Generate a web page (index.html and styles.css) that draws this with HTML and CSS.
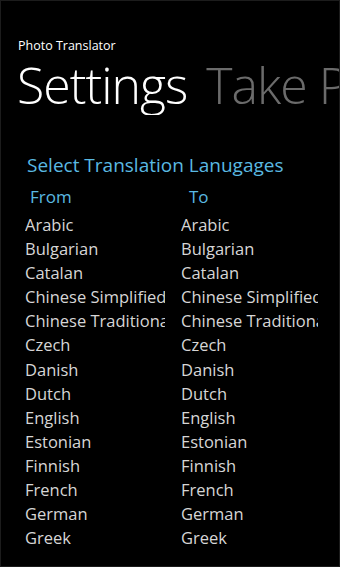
FILE: index.html
```html
<!DOCTYPE html>
<html lang="en">
<head>
    <meta charset="UTF-8">
    <meta name="viewport" content="width=device-width, initial-scale=1.0">
    <title>Photo Translator</title>
    <link rel="stylesheet" href="styles.css">
</head>
<body>
    <div class="phone">
        <header class="header">
            <div class="app-title">Photo Translator</div>
            <div class="pivot">
                <span class="pivot-item active">Settings</span>
                <span class="pivot-item">Take Photo</span>
            </div>
        </header>

        <section class="settings">
            <h2>Select Translation Lanugages</h2>
            <div class="columns">
                <div class="column">
                    <div class="col-label">From</div>
                    <ul class="lang-list">
                        <li>Arabic</li>
                        <li>Bulgarian</li>
                        <li>Catalan</li>
                        <li>Chinese Simplified</li>
                        <li>Chinese Traditional</li>
                        <li>Czech</li>
                        <li>Danish</li>
                        <li>Dutch</li>
                        <li>English</li>
                        <li>Estonian</li>
                        <li>Finnish</li>
                        <li>French</li>
                        <li>German</li>
                        <li>Greek</li>
                    </ul>
                </div>
                <div class="column">
                    <div class="col-label">To</div>
                    <ul class="lang-list">
                        <li>Arabic</li>
                        <li>Bulgarian</li>
                        <li>Catalan</li>
                        <li>Chinese Simplified</li>
                        <li>Chinese Traditional</li>
                        <li>Czech</li>
                        <li>Danish</li>
                        <li>Dutch</li>
                        <li>English</li>
                        <li>Estonian</li>
                        <li>Finnish</li>
                        <li>French</li>
                        <li>German</li>
                        <li>Greek</li>
                    </ul>
                </div>
            </div>
        </section>
    </div>
</body>
</html>
```

FILE: styles.css
```css
:root {
    --background: #000000;
    --text: #ffffff;
    --item: #d6d6d6;
    --muted: #6b6b6b;
    --accent: #5ab9e2;
}

* {
    margin: 0;
    padding: 0;
    box-sizing: border-box;
}

html, body {
    height: 100%;
}

body {
    font-family: "Open Sans", "Noto Sans", sans-serif;
    background: var(--background);
    color: var(--text);
    overflow: hidden;
}

.phone {
    height: 567px;
    overflow: hidden;
    border: 1px solid #1c1c1c;
}

.header {
    padding: 36px 0 0 16px;
}

.app-title {
    font-size: 12.5px;
    line-height: 18px;
    margin-left: 1px;
}

.pivot {
    display: flex;
    gap: 19px;
    white-space: nowrap;
    overflow: hidden;
    font-size: 50px;
    font-weight: 300;
    line-height: 60px;
    letter-spacing: -1px;
}

.pivot-item {
    display: block;
    height: 60px;
    flex-shrink: 0;
}

.pivot-item:not(.active) {
    color: var(--muted);
}

.settings {
    padding: 37px 0 0 24px;
}

.settings h2 {
    font-size: 19px;
    font-weight: 400;
    color: var(--accent);
    line-height: 26px;
    margin-left: 2px;
}

.columns {
    display: flex;
    margin-top: 7px;
}

.column {
    overflow: hidden;
}

.column:first-child {
    width: 140px;
    margin-right: 16px;
}

.column:last-child {
    width: 137px;
}

.col-label {
    font-size: 17px;
    color: var(--accent);
    line-height: 24px;
    margin-left: 5px;
    margin-bottom: 4px;
}

.column:last-child .col-label {
    margin-left: 8px;
}

.lang-list {
    list-style: none;
}

.lang-list li {
    font-size: 16.5px;
    color: var(--item);
    line-height: 24.1px;
    white-space: nowrap;
}
```
